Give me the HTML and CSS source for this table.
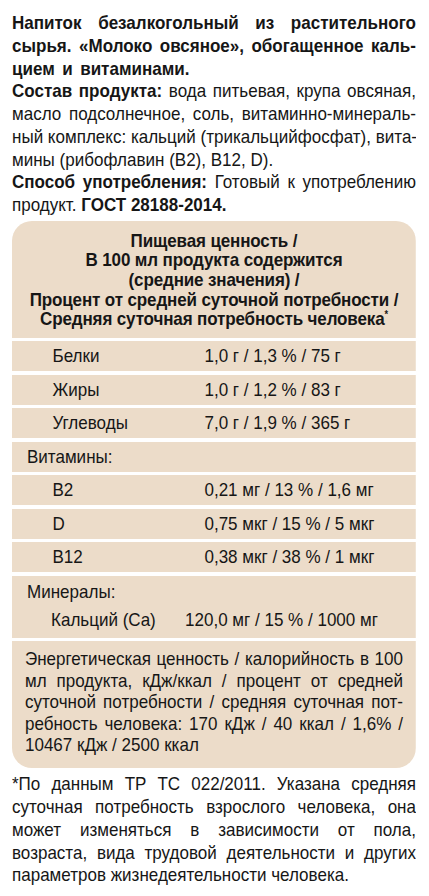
FILE: index.html
```html
<!DOCTYPE html>
<html lang="ru">
<head>
<meta charset="utf-8">
<title>Молоко овсяное</title>
<link rel="stylesheet" href="styles.css">
</head>
<body>
<div class="frame">
<div class="page">
  <div class="intro">
    <div class="ln j b">Напиток безалкогольный из растительного</div>
    <div class="ln j b">сырья. «Молоко овсяное», обогащенное каль-</div>
    <div class="ln b ws">цием и витаминами.</div>
    <div class="ln j"><b>Состав продукта:</b> вода питьевая, крупа овсяная,</div>
    <div class="ln j">масло подсолнечное, соль, витаминно-минераль-</div>
    <div class="ln j">ный комплекс: кальций (трикальцийфосфат), вита-</div>
    <div class="ln">мины (рибофлавин (B2), B12, D).</div>
    <div class="ln j"><b>Способ употребления:</b> Готовый к употреблению</div>
    <div class="ln">продукт. <b>ГОСТ 28188-2014.</b></div>
  </div>

  <div class="panel">
    <div class="head">
      <div>Пищевая ценность /</div>
      <div>В 100 мл продукта содержится</div>
      <div>(средние значения) /</div>
      <div>Процент от средней суточной потребности /</div>
      <div>Средняя суточная потребность человека<sup>*</sup></div>
    </div>
    <div class="row"><span>Белки</span><span>1,0 г / 1,3 % / 75 г</span></div>
    <div class="row"><span>Жиры</span><span>1,0 г / 1,2 % / 83 г</span></div>
    <div class="row"><span>Углеводы</span><span>7,0 г / 1,9 % / 365 г</span></div>
    <div class="row grp">Витамины:</div>
    <div class="row"><span>B2</span><span>0,21 мг / 13 % / 1,6 мг</span></div>
    <div class="row"><span>D</span><span>0,75 мкг / 15 % / 5 мкг</span></div>
    <div class="row"><span>B12</span><span>0,38 мкг / 38 % / 1 мкг</span></div>
    <div class="minerals">
      <div class="grp-line">Минералы:</div>
      <div class="ca"><span>Кальций (Ca)</span><span>120,0 мг / 15 % / 1000 мг</span></div>
    </div>
    <div class="energy">
      <div class="eln j">Энергетическая ценность / калорийность в 100</div>
      <div class="eln j">мл продукта, кДж/ккал / процент от средней</div>
      <div class="eln j">суточной потребности / средняя суточная пот-</div>
      <div class="eln j">ребность человека: 170 кДж / 40 ккал / 1,6% /</div>
      <div class="eln">10467 кДж / 2500 ккал</div>
    </div>
  </div>

  <div class="note">
    <div class="ln j">*По данным ТР ТС 022/2011. Указана средняя</div>
    <div class="ln j">суточная потребность взрослого человека, она</div>
    <div class="ln j">может изменяться в зависимости от пола,</div>
    <div class="ln j">возраста, вида трудовой деятельности и других</div>
    <div class="ln">параметров жизнедеятельности человека.</div>
  </div>
</div>
</div>
</body>
</html>
```

FILE: styles.css
```css
html, body {
  margin: 0;
  padding: 0;
  background: #ffffff;
  overflow-x: hidden;
}
body {
  font-family: "Liberation Sans", Arial, sans-serif;
  color: #161616;
  font-size: 18.5px;
}
.frame {
  width: 404px;
  margin-left: 12px;
  overflow: hidden;
}
/* the label uses a narrow face: condense the whole sheet horizontally */
.page {
  width: 439.13px;
  padding-top: 12px;
  transform: scaleX(0.92);
  transform-origin: 0 0;
}
.ln {
  line-height: 22.75px;
  white-space: nowrap;
}
.j {
  text-align: justify;
  text-align-last: justify;
}
.ws {
  word-spacing: 3px;
}
.b, b {
  font-weight: bold;
}
.intro {
  margin-bottom: 4px;
}
.panel {
  display: flex;
  flex-direction: column;
  gap: 3.5px;
  border-radius: 21.7px / 20px;
  overflow: hidden;
}
.panel > div {
  background: #ecdcc9;
}
.head {
  height: 117px;
  box-sizing: border-box;
  padding-top: 10px;
  text-align: center;
  font-weight: bold;
  font-size: 18.5px;
  line-height: 19.6px;
  letter-spacing: -0.15px;
  white-space: nowrap;
}
.head sup {
  font-size: 10px;
  line-height: 0;
  vertical-align: 7px;
}
.row {
  height: 30px;
  display: grid;
  grid-template-columns: 165.2px 1fr;
  align-items: center;
  padding-left: 44px;
}
.row.grp {
  display: flex;
  padding-left: 16.3px;
}
.minerals {
  height: 62px;
  box-sizing: border-box;
  padding-top: 2px;
}
.grp-line {
  height: 28px;
  line-height: 28px;
  padding-left: 16.3px;
}
.ca {
  height: 28px;
  line-height: 28px;
  display: grid;
  grid-template-columns: 145.7px 1fr;
  padding-left: 42.4px;
}
.energy {
  height: 127px;
  box-sizing: border-box;
  padding: 7px 14.1px 0 14.1px;
}
.eln {
  line-height: 21.5px;
  white-space: nowrap;
}
.note {
  margin-top: 5px;
}
```
